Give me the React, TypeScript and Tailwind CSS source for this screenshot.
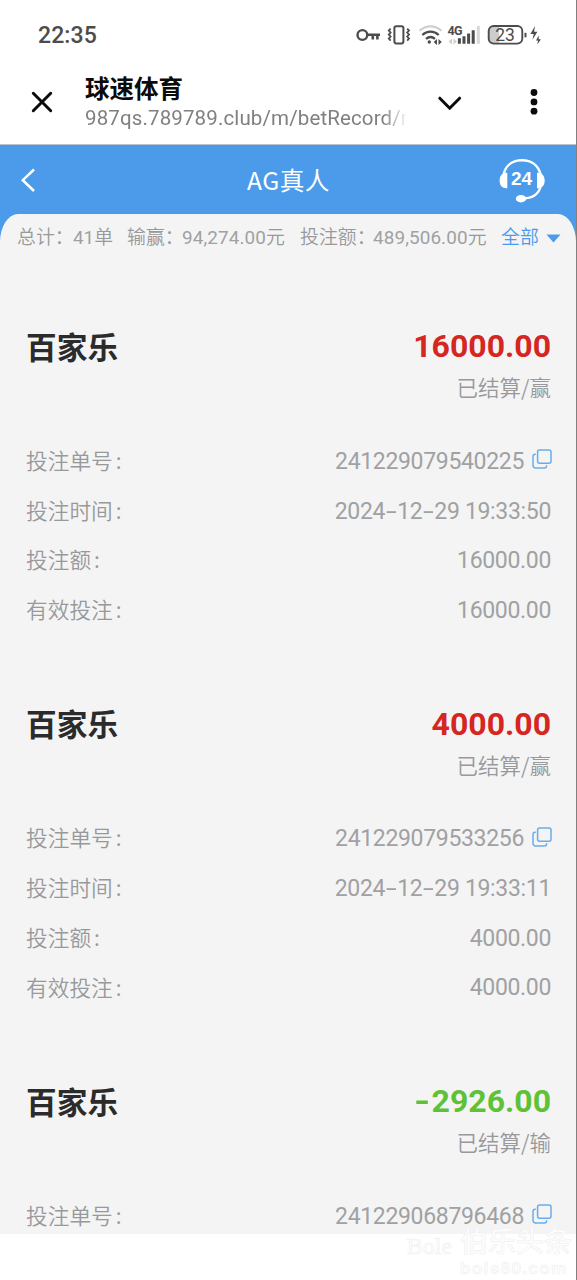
import React from "react";

const cjk = "font-['Noto_Sans_CJK_SC',sans-serif]";
const latin = "font-['Roboto','Noto_Sans_CJK_SC',sans-serif]";

type Bet = {
  amount: string;
  tone: string;
  result: string;
  rows: { label: string; value: string; copy?: boolean }[];
};

const bets: Bet[] = [
  {
    amount: "16000.00",
    tone: "text-[#d5261f]",
    result: "赢",
    rows: [
      { label: "投注单号", value: "241229079540225", copy: true },
      { label: "投注时间", value: "2024-12-29 19:33:50" },
      { label: "投注额", value: "16000.00" },
      { label: "有效投注", value: "16000.00" },
    ],
  },
  {
    amount: "4000.00",
    tone: "text-[#d5261f]",
    result: "赢",
    rows: [
      { label: "投注单号", value: "241229079533256", copy: true },
      { label: "投注时间", value: "2024-12-29 19:33:11" },
      { label: "投注额", value: "4000.00" },
      { label: "有效投注", value: "4000.00" },
    ],
  },
  {
    amount: "-2926.00",
    tone: "text-[#5fc236]",
    result: "输",
    rows: [{ label: "投注单号", value: "241229068796468", copy: true }],
  },
];

function StatusIcons() {
  return (
    <svg width="192" height="28" viewBox="352 21 192 28" fill="none" stroke="#4c4c4c">
      <circle cx="362.4" cy="35" r="4.9" strokeWidth="2.4" />
      <path d="M367.5 34.7H380M372.8 35v4.6M377.4 35v4.6" strokeWidth="2.6" />
      <rect x="394.4" y="26.2" width="9" height="17.2" rx="1.8" strokeWidth="2" />
      <path d="M390.6 28.6l-1.8 2 1.8 2-1.8 2 1.8 2-1.8 2 1.8 2M407.2 28.6l1.8 2-1.8 2 1.8 2-1.8 2 1.8 2-1.8 2" strokeWidth="1.8" />
      <path d="M419.5 30.8c6.4-6 15.6-6 22 0" stroke="#cfcfcf" strokeWidth="2.2" />
      <path d="M422.3 35c4.8-4.5 11.6-4.5 16.4 0M426 38.9c2.8-2.4 6.2-2.4 9 0" strokeWidth="2.3" />
      <circle cx="429.3" cy="42" r="1.7" fill="#4c4c4c" stroke="none" />
      <path d="M437 38.900v6l-3.300-3zM438.500 38.900v6l3.300-3z" fill="#4c4c4c" stroke="none" />
      <text x="447.5" y="34.500" className="font-['Roboto',sans-serif] text-[12.5px] font-bold tracking-[-0.6px]" fill="#4c4c4c" stroke="none">4G</text>
      <path d="M452 38.5v6l-3.4-3zM453.5 38.5v6l3.4-3z" fill="#cfcfcf" stroke="none" />
      <path d="M459.4 43.8v-5.5M464 43.8v-7.6M468.6 43.8v-10.2M473.2 43.8v-13.6" strokeWidth="3" />
      <path d="M478.3 43.8V26" stroke="#d8d8d8" strokeWidth="3" />
      <path d="M499 26h-5.5a5 5 0 0 0-5 5v7.500a5 5 0 0 0 5 5h5.500z" fill="#cccccc" stroke="none" />
      <rect x="488.700" y="26" width="33.600" height="17.600" rx="5" strokeWidth="1.900" />
      <path d="M525.500 32.800v4.500" strokeWidth="2" />
      <text x="495.200" y="41.200" className="font-['Roboto',sans-serif] text-[17.500px]" fill="#4c4c4c" stroke="none">23</text>
      <path d="M535 26l-4.600 8h3.300l-1.200 5.800 4.900-8h-3.300zM538.800 35.600l-2.800 4.800h2l-.6 4.200 3.500-5.400h-2.200z" fill="#4c4c4c" stroke="none" />
    </svg>
  );
}

function Headset() {
  return (
    <svg width="48" height="48" viewBox="498 155.500 48 48" fill="none" stroke="white" strokeWidth="2.400">
      <path d="M503.600 174c2-9 8.800-14.300 18.400-14.300s16.400 5.300 18.600 14.300" />
      <path d="M540.600 186c-1.800 7-7 11.700-17.600 12" />
      <path d="M507.300 172.400v15.300c-5 .6-7.700-2.700-7.700-7.600s3.200-8.400 7.700-7.700zM537 172.400v15.300c4.900.6 7.700-2.700 7.700-7.600s-3.200-8.400-7.700-7.700z" fill="white" stroke="none" />
      <ellipse cx="521" cy="198.200" rx="5.200" ry="3.700" fill="white" stroke="none" />
      <text x="511" y="184.500" className="font-['Liberation_Sans',sans-serif] text-[19px] font-bold" fill="white" stroke="none">24</text>
    </svg>
  );
}

function CopyIcon() {
  return (
    <svg width="20" height="20" viewBox="0 0 20 20" fill="none" stroke="#69aceb" strokeWidth="1.500">
      <rect x="5.600" y="1" width="13.400" height="13.200" rx="2" />
      <path d="M3.800 5.300H3.200A2.200 2.200 0 0 0 1 7.500v9A2.500 2.500 0 0 0 3.500 19h8.800a2.300 2.300 0 0 0 2.300-2.300v-.5" />
    </svg>
  );
}

function WideDashes({ text }: { text: string }) {
  return (
    <>
      {text.split("-").map((part, i) => (
        <React.Fragment key={i}>
          {i > 0 && <span className="mx-[3px] inline-block scale-x-[1.700]">-</span>}
          {part}
        </React.Fragment>
      ))}
    </>
  );
}

function Row({ label, value, copy = false }: { label: string; value: string; copy?: boolean }) {
  return (
    <div className="flex h-[49.7px] items-center justify-between text-[#98999b]">
      <span className={`${cjk} -mt-[2px] text-[21.7px] font-[350] leading-none`}>
        {label}
        <span className="ml-[3px]">:</span>
      </span>
      <span className="flex items-center gap-2">
        <span className={`${latin} mt-px whitespace-pre text-[23px] leading-none tracking-[-0.330px] text-[#a0a1a3]`}>
          <WideDashes text={value} />
        </span>
        {copy && <span className="-mr-px -mt-[3px]"><CopyIcon /></span>}
      </span>
    </div>
  );
}

function Record({ bet }: { bet: Bet }) {
  return (
    <article className="h-[377.5px] shrink-0 pl-[26px] pr-[25px]">
      <div className="-mt-px flex h-[50px] items-center justify-between">
        <h2 className={`${cjk} text-[30.700px] font-bold leading-none text-[#2b2b2b]`}>百家乐</h2>
        <span className={`${latin} text-[32px] font-bold leading-none ${bet.tone}`}>
          {bet.amount.startsWith("-") ? (
            <>
              <span className="mr-[3px] inline-block scale-x-[1.300]">-</span>
              {bet.amount.slice(1)}
            </>
          ) : bet.amount}
        </span>
      </div>
      <div className={`${cjk} flex h-8 items-center justify-end text-[21.500px] font-[350] leading-none text-[#98999b]`}>
        已结算/{bet.result}
      </div>
      <div className="pt-[33px]">
        {bet.rows.map((row) => <Row key={row.label} {...row} />)}
      </div>
    </article>
  );
}

export default function App() {
  return (
    <main className="relative flex h-[1280px] w-[577px] flex-col overflow-hidden border-r border-[#808080] bg-white">
      <div className="flex h-[70px] shrink-0 items-center justify-between pl-[38px] pr-[32px]">
        <span className={`${latin} text-[23px] font-medium leading-none tracking-[0.100px] text-[#4c4c4c]`}>22:35</span>
        <StatusIcons />
      </div>

      <header className="flex h-[75px] shrink-0 items-start border-b border-[#b9c4d0] pl-[31px]">
        <svg className="mt-[21px]" width="22" height="22" viewBox="0 0 22 22" stroke="#0b0b0b" strokeWidth="3" strokeLinecap="round">
          <path d="M2.300 2.300l17.400 17.400M19.700 2.300L2.300 19.700" />
        </svg>
        <div className="ml-8 w-[321px]">
          <h1 className={`${cjk} mt-[5px] text-[24.500px] font-bold leading-[26px] text-[#0b0b0b]`}>球速体育</h1>
          <div className={`${latin} mt-1 whitespace-nowrap text-[20.500px] leading-[26px] tracking-[0.130px] text-[#808080] [mask-image:linear-gradient(to_right,black_298px,transparent_323px)]`}>
            987qs.789789.club/m/betRecord/r
          </div>
        </div>
        <svg className="ml-[31px] mt-[25px]" width="26" height="17" viewBox="0 0 26 17" fill="none" stroke="#0b0b0b" strokeWidth="3" strokeLinecap="round">
          <path d="M2.800 3.200L12.700 13.200 22.600 3.200" />
        </svg>
        <svg className="ml-[66px] mt-[18px]" width="10" height="28" viewBox="0 0 10 28" fill="#0b0b0b">
          <circle cx="5" cy="4.500" r="3.400" />
          <circle cx="5" cy="13.900" r="3.400" />
          <circle cx="5" cy="23.200" r="3.400" />
        </svg>
      </header>

      <section className="h-[1089px] shrink-0 overflow-hidden bg-[#4b9bea]">
        <div className="flex h-[69px] items-center justify-between pl-5 pr-[30px]">
          <svg className="w-[48px]" width="48" height="28" viewBox="0 0 48 28" fill="none" stroke="white" strokeWidth="2.500">
            <path d="M14 3.500L2.800 14.200 14 25" />
          </svg>
          <span className={`${cjk} -mt-px ml-[11px] text-[24.700px] leading-none tracking-[0.500px] text-white`}>AG真人</span>
          <Headset />
        </div>
        <div className="flex h-[1020px] flex-col rounded-t-[18px_28px] bg-[#f4f4f4]">
          <div className={`${latin} flex h-[47px] shrink-0 items-center whitespace-nowrap pl-[17px] pt-px text-[18.900px] font-[350] leading-none text-[#98999b]`}>
            <span className="w-[56px] shrink-0">总计：</span>
            <span className="w-[54px] shrink-0"><span className="font-normal text-[#a0a1a3]">41</span>单</span>
            <span className="w-[55px] shrink-0">输赢：</span>
            <span className="w-[118px] shrink-0"><span className="font-normal tracking-[0.100px] text-[#a0a1a3]">94,274.00</span>元</span>
            <span className="w-[73px] shrink-0">投注额：</span>
            <span className="w-[128px] shrink-0"><span className="font-normal tracking-[0.100px] text-[#a0a1a3]">489,506.00</span>元</span>
            <span className="text-[#4b9bea]">全部</span>
            <svg className="ml-[7px]" width="15" height="9" viewBox="0 0 15 9" fill="#4b9bea"><path d="M.5.500h14L7.500 8.500z" /></svg>
          </div>
          <div className="flex flex-1 flex-col overflow-hidden pt-[61px]">
            {bets.map((bet) => <Record key={bet.amount} bet={bet} />)}
          </div>
        </div>
      </section>

      <div className="absolute bottom-0 right-1 flex h-[60px] items-center gap-2 whitespace-nowrap text-[#fdfdfd] [-webkit-text-stroke:0.600px_#f0f0f0]">
        <span className="-mt-2 font-['Liberation_Serif',serif] text-[24px] leading-[30px]">Bole</span>
        <div className="flex flex-col">
          <span className={`${cjk} text-[28px] font-medium leading-[38px]`}>伯乐头条</span>
          <span className="font-['Liberation_Sans',sans-serif] text-[17px] font-bold leading-[20px] tracking-[1.400px]">bole80.com</span>
        </div>
      </div>
    </main>
  );
}
